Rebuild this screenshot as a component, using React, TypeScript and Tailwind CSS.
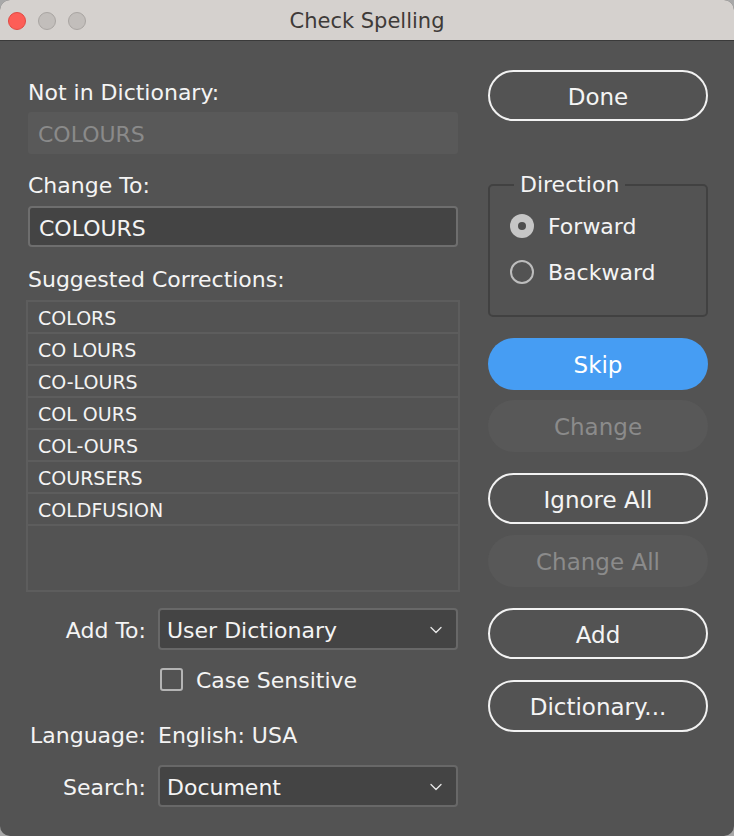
import { ChevronDown } from "lucide-react";

const font = { fontFamily: '"DejaVu Sans", "Liberation Sans", sans-serif' };

const suggestions = ["COLORS", "CO LOURS", "CO-LOURS", "COL OURS", "COL-OURS", "COURSERS", "COLDFUSION"];

// pill shaped button used down the right side
const PillButton = ({ label, kind, className = "" }: { label: string; kind: "outline" | "primary" | "disabled"; className?: string }) => {
  const styles = {
    outline: "border-2 border-[#f2f2f2] text-[#f4f4f4]",
    primary: "bg-[#469df3] text-white",
    disabled: "bg-[#585858] text-[#8b8b8b]",
  };
  return (
    <button className={`h-[51px] w-full rounded-full flex items-center justify-center pt-[3px] text-[23px] ${styles[kind]} ${className}`}>
      {label}
    </button>
  );
};

const SelectBox = ({ value }: { value: string }) => (
  <div className="flex-1 h-[42px] rounded-[4px] border-2 border-[#686868] bg-[#444444] flex items-center justify-between pl-[7px] pr-[10px] pt-[2px] text-[22px] text-[#f4f4f4]">
    <span>{value}</span>
    <ChevronDown size={20} strokeWidth={1.6} className="text-[#e6e6e6]" />
  </div>
);

export default function App() {
  return (
    <div className="w-[734px] h-[836px] bg-[#a8a8a8]" style={font}>
      <div className="w-full h-full rounded-[10px] overflow-hidden flex flex-col bg-[#535353]">
        {/* title bar */}
        <div className="h-[41px] bg-[#d5d1ce] border-b border-[#3a3a3a] relative flex items-center justify-center shrink-0">
          <div className="absolute left-[8px] top-[12px] flex gap-[12px]">
            <span className="w-[18px] h-[18px] rounded-full bg-[#fd5e57] border border-[#e14942]" />
            <span className="w-[18px] h-[18px] rounded-full bg-[#c2bebb] border border-[#a9a5a2]" />
            <span className="w-[18px] h-[18px] rounded-full bg-[#c2bebb] border border-[#a9a5a2]" />
          </div>
          <span className="text-[21px] text-[#3e3a38] pt-[3px]">Check Spelling</span>
        </div>

        <div className="flex pl-[28px] text-[#f4f4f4]">
          {/* left column */}
          <div className="w-[430px] flex flex-col pt-[38px]">
            <div className="h-[28px] leading-[28px] text-[22px]">Not in Dictionary:</div>
            <div className="mt-[5px] h-[42px] rounded-[3px] bg-[#595959] flex items-center pl-[10px] pt-[2px] text-[22px] text-[#8a8a8a]">COLOURS</div>

            <div className="mt-[18px] h-[28px] leading-[28px] text-[22px]">Change To:</div>
            <div className="mt-[6px] h-[41px] rounded-[4px] border-2 border-[#6e6e6e] bg-[#444444] flex items-center pl-[9px] pt-[3px] text-[22px]">COLOURS</div>

            <div className="mt-[19px] h-[28px] leading-[28px] text-[22px]">Suggested Corrections:</div>
            <div className="mt-[6px] -ml-[2px] w-[434px] h-[292px] border-2 border-[#5d5d5d] flex flex-col">
              {suggestions.map((s) => (
                <div key={s} className="h-[32px] border-b-2 border-[#5d5d5d] flex items-center pl-[10px] pt-[2px] text-[19px]">
                  {s}
                </div>
              ))}
            </div>

            <div className="mt-[16px] flex items-center gap-[12px]">
              <span className="w-[118px] text-right text-[22px] pt-[2px]">Add To:</span>
              <SelectBox value="User Dictionary" />
            </div>
            <div className="mt-[16px] flex items-center pl-[132px] gap-[13px]">
              <span className="w-[23px] h-[23px] rounded-[3px] border-2 border-[#b4b4b4]" />
              <span className="text-[22px] leading-[24px] pt-[3px]">Case Sensitive</span>
            </div>
            <div className="mt-[28px] h-[28px] flex items-center gap-[12px] text-[22px]">
              <span className="w-[118px] text-right">Language:</span>
              <span>English: USA</span>
            </div>
            <div className="mt-[16px] flex items-center gap-[12px]">
              <span className="w-[118px] text-right text-[22px] pt-[2px]">Search:</span>
              <SelectBox value="Document" />
            </div>
          </div>

          {/* right column */}
          <div className="w-[220px] ml-[30px] flex flex-col pt-[29px]">
            <PillButton label="Done" kind="outline" />

            <fieldset className="mt-[50px] h-[146px] border-2 border-[#414141] rounded-[5px] pl-[20px] pr-[6px]">
              <legend className="ml-[4px] px-[6px] text-[22px] leading-[28px]">Direction</legend>
              <div className="mt-[9px] flex items-center gap-[14px] text-[22px]">
                <span className="w-[24px] h-[24px] rounded-full bg-[#c6c6c6] flex items-center justify-center">
                  <span className="w-[8px] h-[8px] rounded-full bg-[#4e4e4e]" />
                </span>
                <span className="pt-[2px]">Forward</span>
              </div>
              <div className="mt-[11px] flex items-center gap-[14px] text-[22px]">
                <span className="w-[24px] h-[24px] rounded-full border-2 border-[#bdbdbd]" />
                <span className="pt-[2px]">Backward</span>
              </div>
            </fieldset>

            <PillButton label="Skip" kind="primary" className="mt-[21px] h-[52px]" />
            <PillButton label="Change" kind="disabled" className="mt-[10px] h-[52px]" />
            <PillButton label="Ignore All" kind="outline" className="mt-[21px]" />
            <PillButton label="Change All" kind="disabled" className="mt-[11px] h-[52px]" />
            <PillButton label="Add" kind="outline" className="mt-[21px]" />
            <PillButton label="Dictionary..." kind="outline" className="mt-[21px] h-[52px]" />
          </div>
        </div>
      </div>
    </div>
  );
}
